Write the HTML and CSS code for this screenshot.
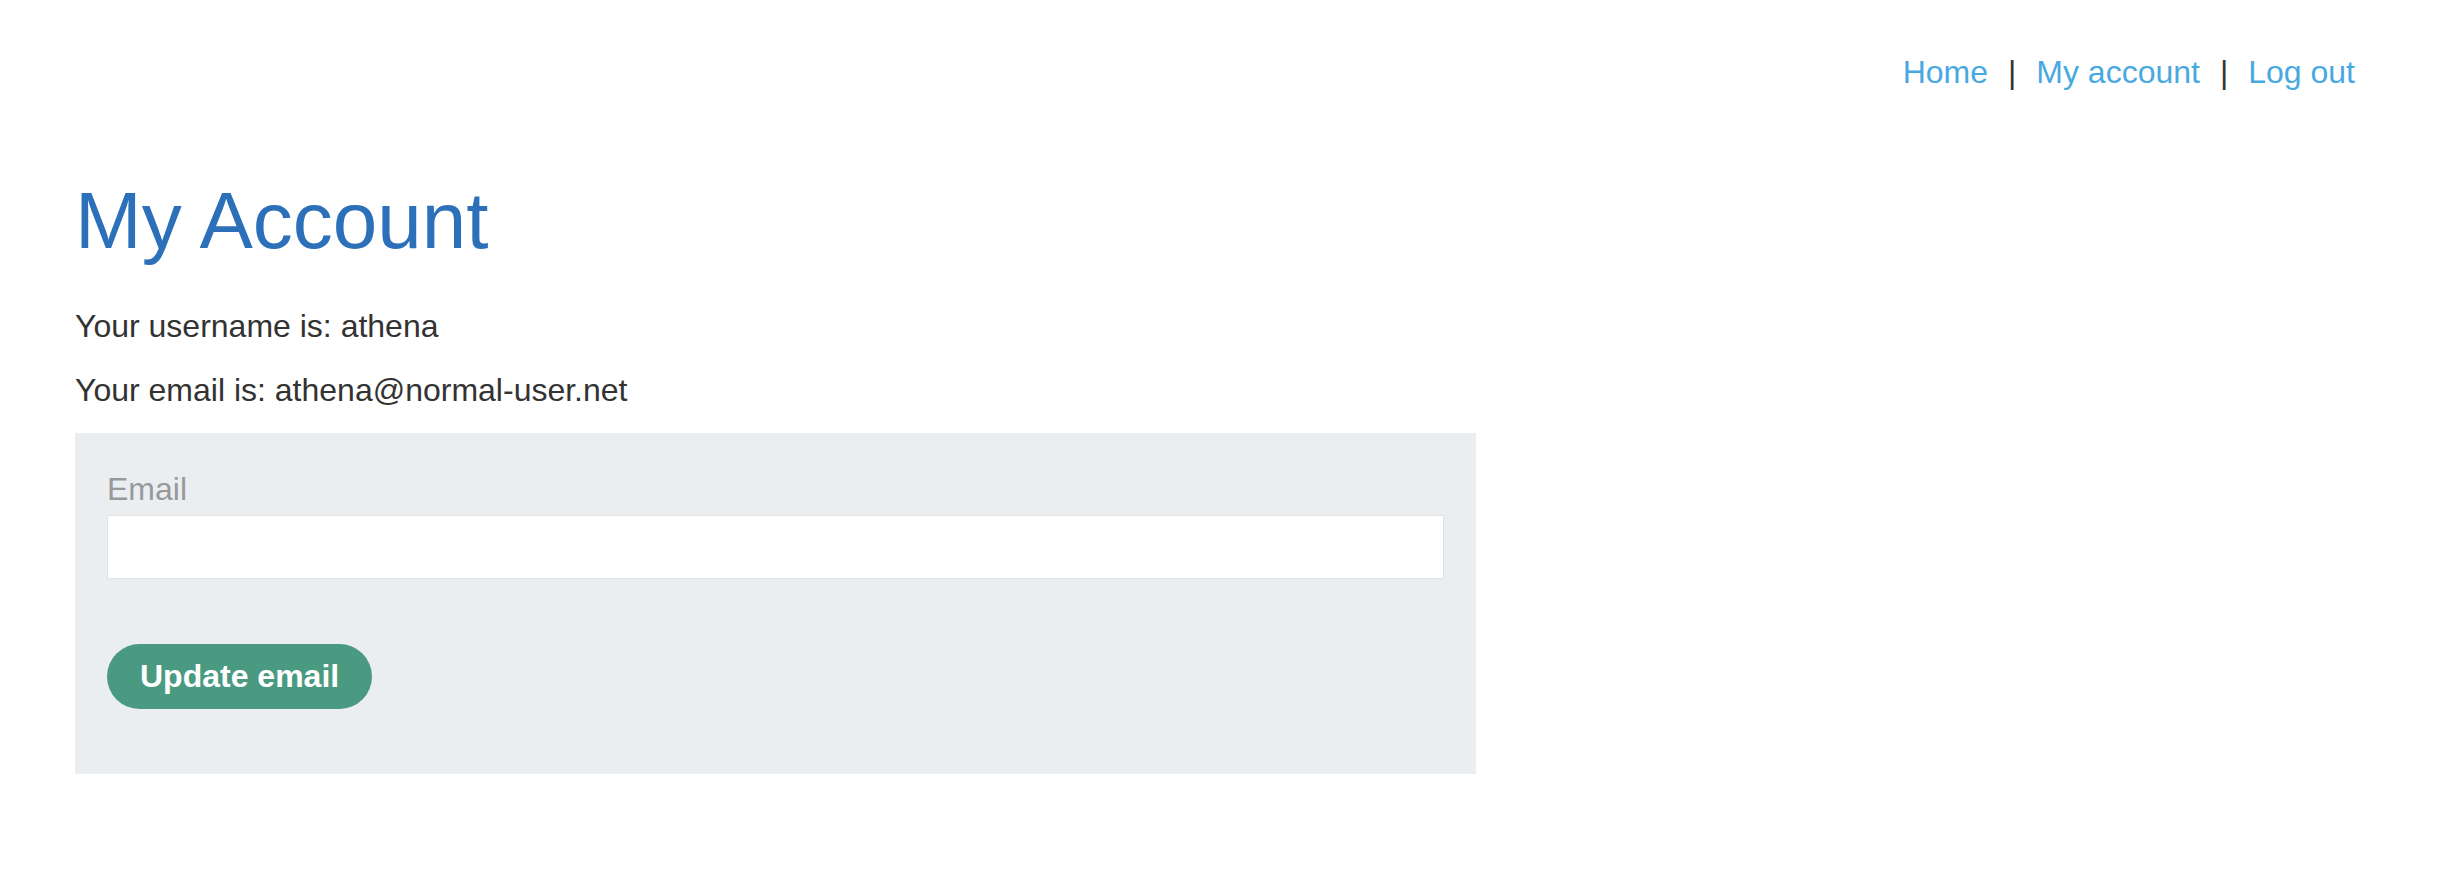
FILE: index.html
```html
<!DOCTYPE html>
<html lang="en">
<head>
    <meta charset="UTF-8">
    <meta name="viewport" content="width=device-width, initial-scale=1.0">
    <title>My Account</title>
    <link rel="stylesheet" href="styles.css">
</head>
<body>
    <div class="container">
        <div class="top-links">
            <a href="#">Home</a><span class="sep">|</span>
            <a href="#">My account</a><span class="sep">|</span>
            <a href="#">Log out</a>
        </div>
        <h1>My Account</h1>
        <p>Your username is: athena</p>
        <p>Your email is: <span id="user-email">athena@normal-user.net</span></p>
        <form class="login-form" id="change-email-form" onsubmit="return false">
            <label for="email">Email</label>
            <input type="email" id="email" name="email">
            <button class="button" type="submit">Update email</button>
        </form>
    </div>
</body>
</html>
```

FILE: styles.css
```css
body {
    font-family: 'Liberation Sans', Arial, Helvetica, sans-serif;
    margin: 0;
    padding: 0;
    background-color: #fff;
    color: #333332;
    font-size: 32px;
}
.container {
    padding: 53px 107px 0 75px;
}
.top-links {
    display: flex;
    justify-content: flex-end;
    line-height: 1.2;
}
.top-links a {
    color: #48a9e1;
    text-decoration: none;
}
.top-links .sep {
    color: #333332;
    margin: 0 20px;
}
h1 {
    color: #2c70b9;
    font-size: 80px;
    font-weight: normal;
    line-height: 1.2;
    margin: 82px 0 33px;
}
p {
    margin: 0 0 16px;
    line-height: 1.5;
}
.login-form {
    background-color: #ebeef1;
    width: 1337px;
    padding: 37px 32px 65px 32px;
    margin-top: 19px;
}
.login-form label {
    display: block;
    color: #999;
    line-height: 1.2;
    margin-bottom: 6px;
}
.login-form input {
    display: block;
    box-sizing: border-box;
    width: 100%;
    height: 64px;
    border: 1px solid #e2e2e2;
    background: #fff;
    font-size: 32px;
    padding: 0 12px;
    margin: 0 0 65px;
}
.button {
    background-color: #4a9a82;
    color: #fff;
    border: none;
    border-radius: 40px;
    height: 65px;
    padding: 0 33px;
    font-family: inherit;
    font-size: 32px;
    font-weight: bold;
    cursor: pointer;
}
```
